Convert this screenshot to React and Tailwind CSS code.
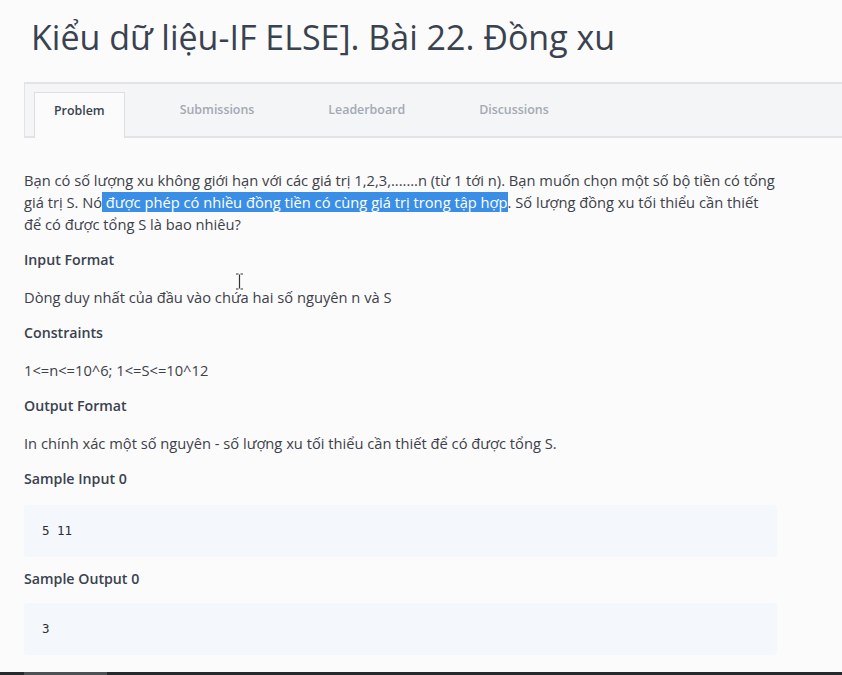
const tabs = ["Problem", "Submissions", "Leaderboard", "Discussions"];

function Section({ title, children }) {
  return (
    <>
      <h3 className="text-[14.2px] leading-[22px] font-semibold text-[#39424e] mb-[15px]">{title}</h3>
      <p className="text-[14.7px] leading-[22px] text-[#3d4148] mb-[14px]">{children}</p>
    </>
  );
}

function CodeBlock({ text }) {
  return (
    <div className="w-[753px] h-[52px] flex items-center pl-[18px] rounded-[3px] bg-[#f4f7fb] font-['DejaVu_Sans_Mono',monospace] text-[12.5px] text-[#2b2f33]">
      {text}
    </div>
  );
}

export default function App() {
  return (
    <div className="relative h-[675px] overflow-hidden flex flex-col bg-[#fbfbfc] font-['Open_Sans',sans-serif]">
      <div className="flex-1">
        <h1 className="pl-[31px] pt-[13px] text-[34px] leading-[48px] text-[#39424e] font-normal">
          Kiểu dữ liệu-IF ELSE]. Bài 22. Đồng xu
        </h1>

        <div className="mt-[21px] ml-[24px] h-[56px] flex items-end pl-[9px] gap-[36px] bg-[#f4f5f7] border-t-2 border-b-2 border-l border-[#e1e3e7]">
          {tabs.map((t, i) =>
            i === 0 ? (
              <div key={t} className="-mb-[2px] h-[46px] pb-[9px] px-[19px] flex items-center bg-[#fbfbfc] border border-b-0 border-[#dcdee2] text-[12.4px] font-semibold text-[#39424e]">
                {t}
              </div>
            ) : (
              <div key={t} className="-mb-[2px] h-[46px] pb-[9px] px-[19px] flex items-center text-[12.4px] font-semibold text-[#a3a9b3]">
                {t}
              </div>
            )
          )}
        </div>

        <div className="pl-[24px] pt-[31px] w-[790px]">
          <p className="text-[14.7px] leading-[22px] text-[#3d4148] mb-[14px] w-[754px]">
            Bạn có số lượng xu không giới hạn với các giá trị 1,2,3,.......n (từ 1 tới n). Bạn muốn chọn một số bộ tiền có tổng giá trị S. Nó<span className="bg-[#3a8ee6] text-white"> được phép có nhiều đồng tiền có cùng giá trị trong tập hợp</span>. Số lượng đồng xu tối thiểu cần thiết để có được tổng S là bao nhiêu?
          </p>

          <Section title="Input Format">Dòng duy nhất của đầu vào chứa hai số nguyên n và S</Section>
          <Section title="Constraints">1&lt;=n&lt;=10^6; 1&lt;=S&lt;=10^12</Section>
          <Section title="Output Format">In chính xác một số nguyên - số lượng xu tối thiểu cần thiết để có được tổng S.</Section>

          <h3 className="text-[14.2px] leading-[22px] font-semibold text-[#39424e] mb-[15px]">Sample Input 0</h3>
          <CodeBlock text="5 11" />
          <h3 className="mt-[11px] text-[14.2px] leading-[22px] font-semibold text-[#39424e] mb-[13px]">Sample Output 0</h3>
          <CodeBlock text="3" />
        </div>
      </div>

      <div className="h-[3px] shrink-0 flex bg-[#25292c]">
        <div className="ml-[24px] w-[83px] bg-[#4d5154]" />
      </div>

      {/* mouse text cursor */}
      <svg className="absolute left-[235px] top-[273px]" width="9" height="17" viewBox="0 0 9 17">
        <path d="M1 1h2.5M5.5 1H8M4.5 1.5v14M1 16h2.5M5.5 16H8" stroke="#333" strokeWidth="1.2" fill="none" />
      </svg>
    </div>
  );
}
